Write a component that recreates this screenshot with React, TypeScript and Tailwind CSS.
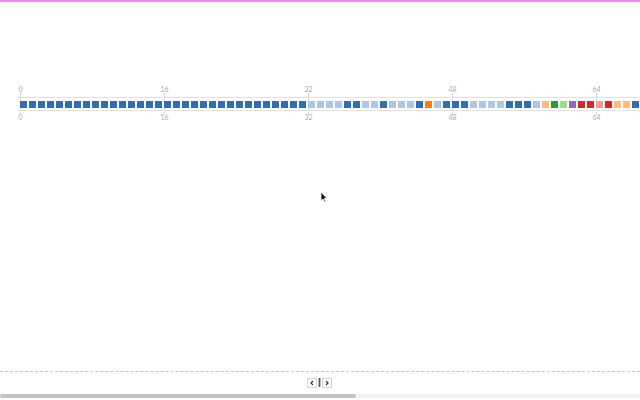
import React from 'react';

const D = '#2f6db4';
const L = '#aec7e8';
const O = '#ff7f0e';
const LO = '#ffbb78';
const G = '#2ca02c';
const LG = '#98df8a';
const R = '#d62728';
const PK = '#ff9896';
const P = '#9467bd';

const cells: string[] = [
    ...Array(32).fill(D),
    L, L, L, L, D, D, L, L, D, L, L, L, D, O, L, D, D, D, L, L, L, L, D, D, D, L,
    LO, G, LG, P, R, R, PK, R, LO, LO, D, D, D,
];

const ticks = [0, 16, 32, 48, 64];

const AxisLabels: React.FC = () => (
    <div className="relative h-[9px]">
        {ticks.map((t) => (
            <span
                key={t}
                className="absolute top-0 -translate-x-1/2 text-[7px] leading-[9px] text-[#ababab]"
                style={{ left: 20.5 + t * 9 }}
            >
                {t}
            </span>
        ))}
    </div>
);

const Cursor: React.FC = () => (
    <svg className="absolute left-[320px] top-[189px]" width="8" height="12" viewBox="0 0 8 12">
        <path d="M1 1 L1 10 L3 8 L4.6 11 L5.8 10.4 L4.3 7.6 L7 7.6 Z" fill="#111" stroke="#fff" strokeWidth="0.8" />
    </svg>
);

export default function App() {
    return (
        <div className="relative w-[640px] h-[400px] overflow-hidden bg-white flex flex-col border-t-2 border-[#f183f5]" style={{ fontFamily: 'Lato, "Open Sans", sans-serif' }}>
            <div className="pt-[83px]">
                <AxisLabels />
                <div className="relative mt-[3px] ml-[18px] h-[14px] border-y border-[#e3e3e3]">
                    {ticks.map((t) => (
                        <div
                            key={t}
                            className="absolute top-[-5px] bottom-[-5px] border-l border-dotted border-[#c8c8c8]"
                            style={{ left: 2 + t * 9 }}
                        />
                    ))}
                    <div className="relative flex gap-[2px] pl-[2px] pt-[3px]">
                        {cells.map((c, i) => (
                            <div key={i} className="w-[7px] h-[7px] shrink-0" style={{ backgroundColor: c }} />
                        ))}
                    </div>
                </div>
                <div className="mt-[2px]">
                    <AxisLabels />
                </div>
            </div>
            <div className="flex-1" />
            <div className="border-t border-dashed border-[#c4c4c4]">
                <div className="flex justify-center items-center gap-[1px] pt-[6px] pr-[1px]">
                    <button className="w-[10px] h-[10px] border border-[#d4d4d4] flex items-center justify-center">
                        <svg width="6" height="6" viewBox="0 0 6 6"><path d="M4 1 L2 3 L4 5" fill="none" stroke="#333" strokeWidth="1.2" /></svg>
                    </button>
                    <div className="w-[3px] h-[9px] -mt-[2px] bg-[#555] border-x border-[#bbb]" />
                    <button className="w-[10px] h-[10px] border border-[#d4d4d4] flex items-center justify-center">
                        <svg width="6" height="6" viewBox="0 0 6 6"><path d="M2 1 L4 3 L2 5" fill="none" stroke="#333" strokeWidth="1.2" /></svg>
                    </button>
                </div>
                <div className="mt-[6px] mb-[2px] h-[4px] flex bg-[#f1f1f1]">
                    <div className="w-[356px] h-full rounded-full bg-[#c3c3c3]" />
                </div>
            </div>
            <Cursor />
        </div>
    );
}
